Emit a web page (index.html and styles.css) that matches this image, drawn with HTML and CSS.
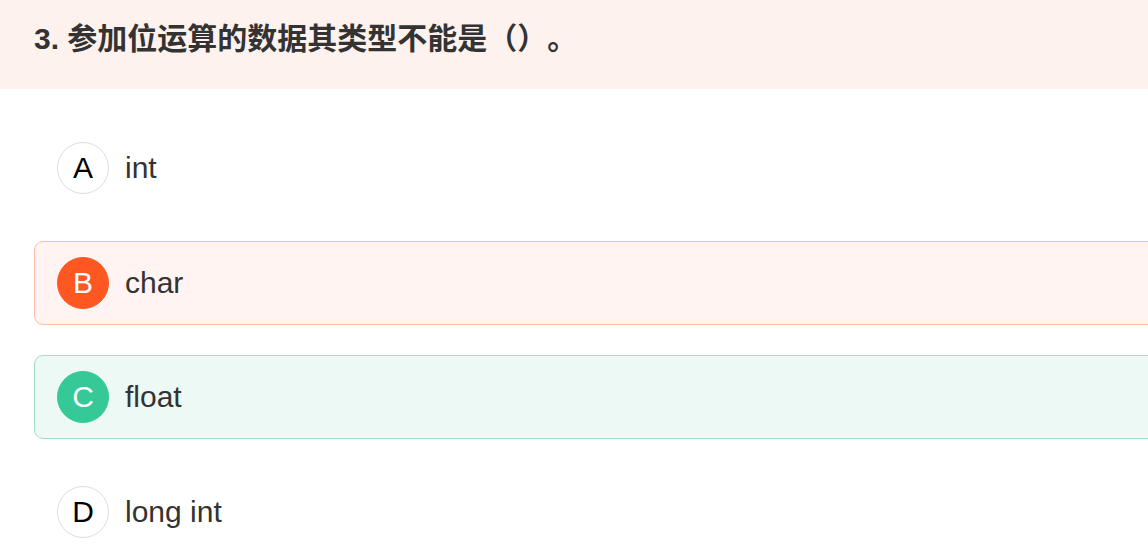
FILE: index.html
```html
<!DOCTYPE html>
<html lang="zh">
<head>
<meta charset="utf-8">
<title>Question</title>
<link rel="stylesheet" href="styles.css">
</head>
<body>
<div class="page">
  <div class="question">3. 参加位运算的数据其类型不能是<span class="cjk">（）。</span></div>
  <div class="options">
    <div class="option">
      <span class="badge">A</span>
      <span class="label">int</span>
    </div>
    <div class="option wrong">
      <span class="badge">B</span>
      <span class="label">char</span>
    </div>
    <div class="option right">
      <span class="badge">C</span>
      <span class="label">float</span>
    </div>
    <div class="option">
      <span class="badge">D</span>
      <span class="label">long int</span>
    </div>
  </div>
</div>
</body>
</html>
```

FILE: styles.css
```css
html, body {
  margin: 0;
  padding: 0;
  background: #ffffff;
  overflow: hidden;
}

.page {
  font-family: "Liberation Sans", Arial, "Noto Sans CJK SC", sans-serif;
  color: #333333;
}

.question {
  background: #fef2ee;
  height: 89px;
  box-sizing: border-box;
  padding: 14px 30px 0 34px;
  line-height: 44px;
  font-size: 30px;
  font-weight: bold;
  color: #333333;
  text-spacing-trim: space-all;
}

.cjk {
  font-family: "Noto Sans CJK SC", sans-serif;
  text-spacing-trim: space-all;
}

.options {
  display: flex;
  flex-direction: column;
  gap: 30.5px;
  padding: 37px 0 0 34px;
  margin-right: -30px;
}

.option {
  display: flex;
  align-items: center;
  gap: 16px;
  height: 84px;
  box-sizing: border-box;
  padding-left: 22px;
  border: 1px solid transparent;
  border-radius: 9px;
}

.option.wrong {
  background: #fff4f1;
  border-color: #ffbca6;
}

.option.right {
  background: #edf9f5;
  border-color: #9fdfc8;
}

.badge {
  width: 52px;
  height: 52px;
  box-sizing: border-box;
  border-radius: 50%;
  border: 1px solid #dddddd;
  background: #ffffff;
  color: #000000;
  display: flex;
  align-items: center;
  justify-content: center;
  font-size: 30px;
  flex: none;
}

.option.wrong .badge {
  background: #ff5722;
  border-color: #ff5722;
  color: #ffffff;
}

.option.right .badge {
  background: #34c997;
  border-color: #34c997;
  color: #ffffff;
}

.label {
  font-size: 30px;
  color: #333333;
}
```
